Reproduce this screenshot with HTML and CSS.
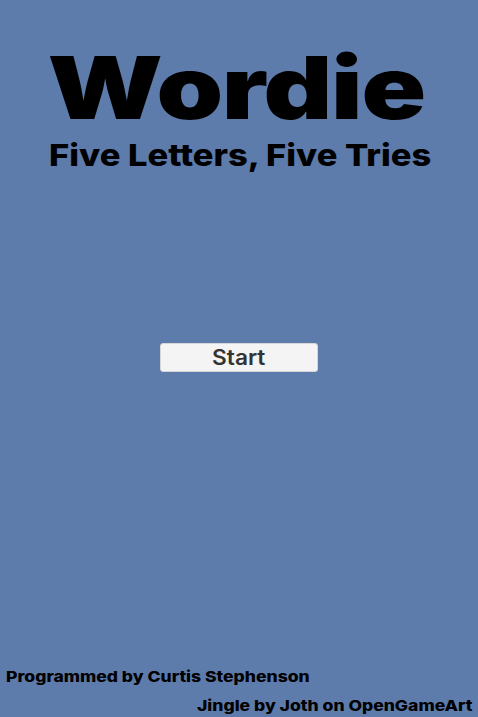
FILE: index.html
```html
<!DOCTYPE html>
<html>
<head>
<meta charset="utf-8">
<link rel="stylesheet" href="styles.css">
</head>
<body>
<div class="page">
  <header class="head">
    <h1 class="title"><span class="wide title-text">Wordie</span></h1>
    <h2 class="subtitle"><span class="wide sub-text">Five Letters, Five Tries</span></h2>
  </header>
  <main class="center">
    <button class="start"><span class="wide start-text">Start</span></button>
  </main>
  <footer class="foot">
    <div class="credit left"><span class="wide credit-l">Programmed by Curtis Stephenson</span></div>
    <div class="credit right"><span class="wide credit-r">Jingle by Joth on OpenGameArt</span></div>
  </footer>
</div>
</body>
</html>
```
FILE: styles.css
```css
html, body {
  margin: 0;
  padding: 0;
  height: 100%;
}
body {
  background: #5d7bab;
  font-family: Inter, "Noto Sans", sans-serif;
  color: #000;
}
.page {
  height: 717px;
  display: flex;
  flex-direction: column;
}
.wide {
  display: inline-block;
}
.head {
  padding-top: 38px;
  text-align: center;
}
.title {
  margin: 0;
  font-size: 86px;
  font-weight: 900;
  line-height: 100px;
  letter-spacing: -1px;
}
.title-text {
  transform: scaleX(1.24);
  margin-left: -6px;
}
.subtitle {
  margin: 0;
  font-size: 30px;
  font-weight: 800;
  line-height: 34px;
}
.sub-text {
  transform: scaleX(1.15);
  margin-left: 3px;
}
.center {
  display: flex;
  justify-content: center;
  padding-top: 171px;
  flex: 1;
}
.start {
  width: 158px;
  height: 29px;
  background: #f4f4f4;
  border: 1px solid #d6d6d6;
  border-radius: 3px;
  font-family: Inter, sans-serif;
  font-size: 21px;
  font-weight: 600;
  color: #333;
  padding: 0;
  line-height: 27px;
}
.start-text {
  transform: scaleX(1.08);
}
.foot {
  display: flex;
  flex-direction: column;
  gap: 7px;
  padding: 0 5px 0 6px;
}
.credit {
  font-size: 15px;
  font-weight: 800;
  line-height: 22px;
}
.credit-l {
  transform: scaleX(1.17);
  transform-origin: left center;
}
.right {
  text-align: right;
}
.credit-r {
  transform: scaleX(1.17);
  transform-origin: right center;
}
```
